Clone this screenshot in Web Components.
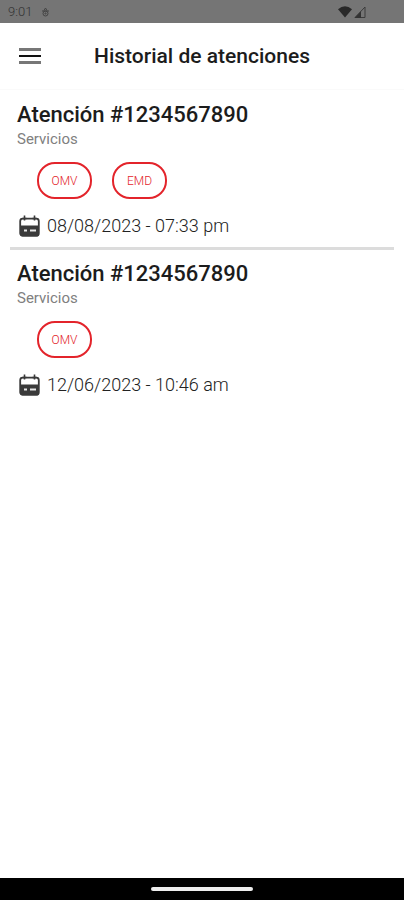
<!DOCTYPE html>
<html lang="es">
<head>
<meta charset="utf-8">
<meta name="viewport" content="width=device-width, initial-scale=1">
<title>Historial de atenciones</title>
<style>
  body {
    margin: 0;
    font-family: Roboto, "Liberation Sans", sans-serif;
    color: #1c1c1c;
    background: #fff;
  }
</style>
</head>
<body>
<history-app>
  <status-bar slot="top" time="9:01"></status-bar>
  <app-header slot="top">Historial de atenciones</app-header>
  <care-card number="1234567890" date="08/08/2023 - 07:33 pm">
    <service-chip>OMV</service-chip>
    <service-chip>EMD</service-chip>
  </care-card>
  <care-card number="1234567890" date="12/06/2023 - 10:46 am">
    <service-chip>OMV</service-chip>
  </care-card>
  <nav-bar slot="bottom"></nav-bar>
</history-app>

<script>
function makeTemplate(html) {
  const template = document.createElement("template");
  template.innerHTML = html;
  return template;
}

// Page shell: bars on top and bottom, list in between
const appTemplate = makeTemplate(`
<style>
  :host {
    display: flex;
    flex-direction: column;
    min-height: 100vh;
  }
  main {
    flex: 1;
    padding: 11px 10px 0;
  }
</style>
<slot name="top"></slot>
<main><slot></slot></main>
<slot name="bottom"></slot>
`);

class HistoryApp extends HTMLElement {
  constructor() {
    super();
    this.attachShadow({ mode: "open" });
    this.shadowRoot.appendChild(appTemplate.content.cloneNode(true));
  }
}

const statusTemplate = makeTemplate(`
<style>
  :host {
    display: flex;
    align-items: center;
    gap: 9px;
    height: 23px;
    padding: 0 38px 0 8px;
    font-size: 13px;
    font-weight: 300;
    color: #333;
    background: #757575;
  }
  svg {
    display: block;
  }
  .signals {
    display: flex;
    gap: 2px;
    margin-left: auto;
  }
</style>
<span class="time"></span>
<svg width="9" height="10" viewBox="0 0 9 10" fill="none" stroke="#444">
  <path d="M3 3.500L4.500 1L6 3.500M1 4h7" />
  <circle cx="4.500" cy="6.500" r="2.500" />
  <circle cx="4.500" cy="6.500" r="0.600" />
</svg>
<span class="signals">
  <svg width="14" height="12" viewBox="0 0 14 12">
    <path d="M0 3.200Q7-2.600 14 3.200L7 11.500z" fill="#292929" />
  </svg>
  <svg width="12" height="12" viewBox="0 0 12 12">
    <path d="M1 11.500L11 1v10.500z" fill="none" stroke="#3c3c3c" />
    <path d="M0.500 12L7 5.200V12z" fill="#333" />
  </svg>
</span>
`);

class StatusBar extends HTMLElement {
  constructor() {
    super();
    this.attachShadow({ mode: "open" });
    this.shadowRoot.appendChild(statusTemplate.content.cloneNode(true));
    this.shadowRoot.querySelector(".time").textContent =
      this.getAttribute("time");
  }
}

const headerTemplate = makeTemplate(`
<style>
  :host {
    display: grid;
    grid-template-columns: 40px 1fr 40px;
    align-items: center;
    height: 66px;
    padding: 0 10px;
    border-bottom: 1px solid #fafafa;
  }
  button {
    display: grid;
    place-items: center;
    width: 40px;
    height: 40px;
    padding: 0;
    border: 0;
    background: none;
  }
  h1 {
    margin: 0;
    font-size: 21px;
    font-weight: 500;
    line-height: 24px;
    text-align: center;
  }
</style>
<button type="button" aria-label="Menú">
  <svg width="22" height="16" viewBox="0 0 22 16">
    <path d="M0 0h22v3H0zM0 13h22v3H0z" fill="#777" />
    <path d="M0 7h22v2H0z" fill="#111" />
  </svg>
</button>
<h1><slot></slot></h1>
`);

class AppHeader extends HTMLElement {
  constructor() {
    super();
    this.attachShadow({ mode: "open" });
    this.shadowRoot.appendChild(headerTemplate.content.cloneNode(true));
  }
}

const cardTemplate = makeTemplate(`
<style>
  :host {
    display: block;
    padding: 10px 7px 9px;
  }
  :host(:first-of-type) {
    padding-top: 0;
    border-bottom: 3px solid #dcdcdc;
  }
  h2 {
    margin: 0;
    font-size: 22px;
    font-weight: 500;
    line-height: 28px;
  }
  p {
    margin: 0;
    font-size: 15px;
    line-height: 20px;
    color: #808080;
  }
  .chips {
    display: flex;
    flex-wrap: wrap;
    gap: 20px;
    padding: 13px 20px 15px;
  }
  .date {
    display: flex;
    align-items: center;
    gap: 7px;
    padding-left: 2px;
    font-size: 18px;
    font-weight: 300;
    line-height: 24px;
    color: #222;
  }
</style>
<article>
  <h2></h2>
  <p>Servicios</p>
  <div class="chips"><slot></slot></div>
  <div class="date">
    <svg width="21" height="22" viewBox="0 0 21 22">
      <rect x="1.200" y="3.700" width="18.600" height="17" rx="2.500" fill="#fff" stroke="#3a3a3a" stroke-width="1.800" />
      <path d="M1 10.500h19v8.500q0 2.500-2.500 2.500h-14Q1 21.500 1 19z" fill="#3a3a3a" />
      <path d="M5.500 0.500v5M15.500 0.500v5M3.500 3.500h4M13.500 3.500h4" stroke="#3a3a3a" stroke-width="1.600" />
      <path d="M5 15.500h3M11 15.500h6" stroke="#e8e8e8" stroke-width="1.800" />
    </svg>
    <time></time>
  </div>
</article>
`);

class CareCard extends HTMLElement {
  constructor() {
    super();
    this.attachShadow({ mode: "open" });
    this.shadowRoot.appendChild(cardTemplate.content.cloneNode(true));
    this.shadowRoot.querySelector("h2").textContent =
      "Atención #" + this.getAttribute("number");
    this.shadowRoot.querySelector("time").textContent =
      this.getAttribute("date");
  }
}

const chipTemplate = makeTemplate(`
<style>
  :host {
    display: grid;
    place-items: center;
    box-sizing: border-box;
    min-width: 55px;
    height: 37px;
    padding: 0 12px;
    border: 2px solid #e3242b;
    border-radius: 18px;
    font-size: 12px;
    font-weight: 300;
    color: #e3242b;
  }
</style>
<span><slot></slot></span>
`);

class ServiceChip extends HTMLElement {
  constructor() {
    super();
    this.attachShadow({ mode: "open" });
    this.shadowRoot.appendChild(chipTemplate.content.cloneNode(true));
  }
}

const navTemplate = makeTemplate(`
<style>
  :host {
    display: grid;
    place-items: center;
    height: 22px;
    background: #000;
  }
  div {
    width: 102px;
    height: 4px;
    border-radius: 2px;
    background: #eee;
  }
</style>
<div></div>
`);

class NavBar extends HTMLElement {
  constructor() {
    super();
    this.attachShadow({ mode: "open" });
    this.shadowRoot.appendChild(navTemplate.content.cloneNode(true));
  }
}

window.customElements.define("history-app", HistoryApp);
window.customElements.define("status-bar", StatusBar);
window.customElements.define("app-header", AppHeader);
window.customElements.define("care-card", CareCard);
window.customElements.define("service-chip", ServiceChip);
window.customElements.define("nav-bar", NavBar);
</script>
</body>
</html>
